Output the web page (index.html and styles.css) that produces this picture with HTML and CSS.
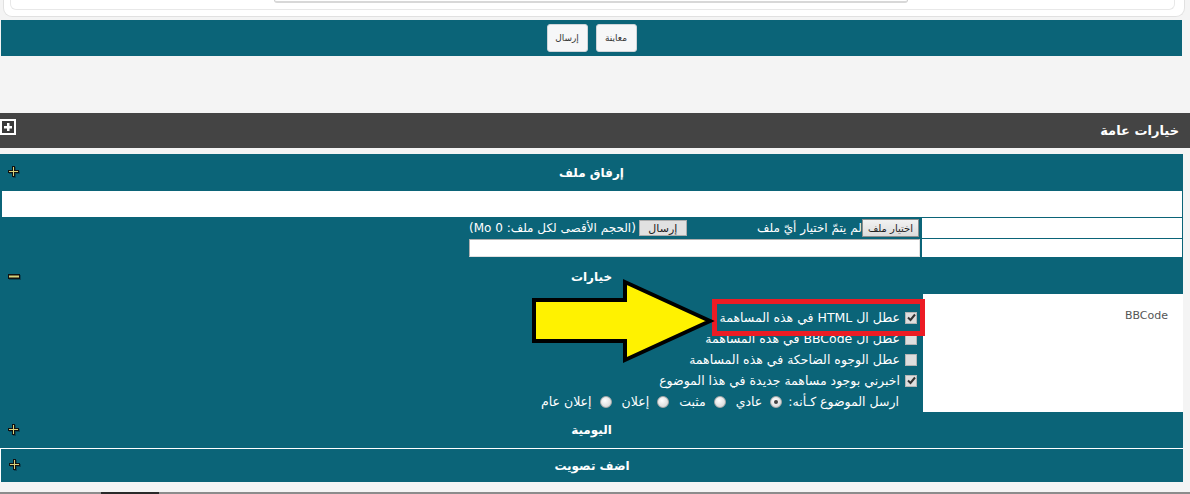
FILE: index.html
```html
<!DOCTYPE html>
<html lang="ar" dir="rtl">
<head>
    <meta charset="UTF-8">
    <title>إرسال موضوع جديد</title>
    <link rel="stylesheet" href="styles.css">
</head>
<body>
    <div class="editor-foot">
        <div class="editor-inner">
            <div class="editor-field"></div>
        </div>
    </div>

    <div class="submit-bar">
        <button class="small-btn">معاينة</button>
        <button class="small-btn">إرسال</button>
    </div>

    <div class="group-bar">
        <h2 class="group-title">خيارات عامة</h2>
        <span class="group-toggle">
            <svg width="16" height="16" viewBox="0 0 16 16">
                <rect x="0" y="0" width="16" height="16" fill="#fff"/>
                <rect x="2" y="2" width="12" height="12" fill="#3a3a3a"/>
                <rect x="7" y="4" width="2.5" height="8" fill="#fff"/>
                <rect x="4" y="7" width="8" height="2.5" fill="#fff"/>
            </svg>
        </span>
    </div>

    <div class="panel">
        <div class="panel-head">
            <span class="head-title">إرفاق ملف</span>
            <span class="head-icon">
                <svg width="13" height="13" viewBox="0 0 13 13">
                    <path d="M5 1h3v4h4v3h-4v4h-3v-4h-4v-3h4z" fill="#063442" opacity="0.6"/>
                    <path d="M4 0h3v4h4v3h-4v4h-3v-4h-4v-3h4z" fill="#111"/>
                    <path d="M5 1h1v4h4v1h-4v4h-1v-4h-4v-1h4z" fill="#d9d27a"/>
                </svg>
            </span>
        </div>
        <div class="attach-row"></div>
        <div class="attach-grid">
            <div class="cell-white"></div>
            <div class="cell-file">
                <span class="file-pick">
                    <button class="file-btn">اختيار ملف</button>
                    <span>لم يتمّ اختيار أيّ ملف</span>
                </span>
                <span class="file-send">
                    <button class="grey-btn">إرسال</button>
                    <span>(الحجم الأقصى لكل ملف: 0 Mo)</span>
                </span>
            </div>
            <div class="cell-white"></div>
            <div class="cell-input"><input type="text" class="text-input"></div>
        </div>

        <div class="panel-head head-options">
            <span class="head-title">خيارات</span>
            <span class="head-icon">
                <svg width="13" height="6" viewBox="0 0 13 6">
                    <rect x="1" y="1" width="12" height="5" fill="#063442" opacity="0.6"/>
                    <rect x="0" y="0" width="12" height="5" fill="#111"/>
                    <rect x="1" y="1.5" width="10" height="2" fill="#d9d27a"/>
                </svg>
            </span>
        </div>
        <div class="options-row">
            <div class="options-note">BBCode</div>
            <div class="options-list">
                <label class="opt opt-marked">
                    <span class="box checked">
                        <svg width="9" height="9" viewBox="0 0 9 9"><path d="M1 4.5l2.5 2.5l4.5-5.5" fill="none" stroke="#333" stroke-width="2"/></svg>
                    </span>
                    عطل ال HTML في هذه المساهمة
                </label>
                <label class="opt"><span class="box"></span>عطل ال BBCode في هذه المساهمة</label>
                <label class="opt"><span class="box"></span>عطل الوجوه الضاحكة في هذه المساهمة</label>
                <label class="opt">
                    <span class="box checked">
                        <svg width="9" height="9" viewBox="0 0 9 9"><path d="M1 4.5l2.5 2.5l4.5-5.5" fill="none" stroke="#333" stroke-width="2"/></svg>
                    </span>
                    اخبرني بوجود مساهمة جديدة في هذا الموضوع
                </label>
                <div class="opt post-type">
                    <span class="type-label">ارسل الموضوع كـأنه:</span>
                    <span class="radio on"></span><span class="type-name">عادي</span>
                    <span class="radio"></span><span class="type-name">مثبت</span>
                    <span class="radio"></span><span class="type-name">إعلان</span>
                    <span class="radio"></span><span class="type-name">إعلان عام</span>
                </div>

                <svg class="pointer-arrow" width="188" height="90" viewBox="0 0 188 90">
                    <polygon points="5,24 96,24 96,6 181,45 96,84 96,65 5,65" fill="#fff200" stroke="#000" stroke-width="4"/>
                </svg>
            </div>
        </div>

        <div class="panel-head head-daily">
            <span class="head-title">اليومية</span>
            <span class="head-icon">
                <svg width="13" height="13" viewBox="0 0 13 13">
                    <path d="M5 1h3v4h4v3h-4v4h-3v-4h-4v-3h4z" fill="#063442" opacity="0.6"/>
                    <path d="M4 0h3v4h4v3h-4v4h-3v-4h-4v-3h4z" fill="#111"/>
                    <path d="M5 1h1v4h4v1h-4v4h-1v-4h-4v-1h4z" fill="#d9d27a"/>
                </svg>
            </span>
        </div>
    </div>

    <div class="panel poll">
        <div class="panel-head head-poll">
            <span class="head-title">اضف تصويت</span>
            <span class="head-icon">
                <svg width="13" height="13" viewBox="0 0 13 13">
                    <path d="M5 1h3v4h4v3h-4v4h-3v-4h-4v-3h4z" fill="#063442" opacity="0.6"/>
                    <path d="M4 0h3v4h4v3h-4v4h-3v-4h-4v-3h4z" fill="#111"/>
                    <path d="M5 1h1v4h4v1h-4v4h-1v-4h-4v-1h4z" fill="#d9d27a"/>
                </svg>
            </span>
        </div>
    </div>

    <div class="page-end"></div>
</body>
</html>
```

FILE: styles.css
```css
body {
    margin: 0;
    background-color: #f4f4f4;
    font-family: "DejaVu Sans", sans-serif;
    font-size: 12px;
    color: #fff;
}

/* bottom of the message editor */
.editor-foot {
    height: 16px;
    margin: 0 5px 0 3px;
    background-color: #fff;
    border: 1px solid #e1e1e1;
    border-top: none;
    border-radius: 0 0 9px 9px;
}

.editor-inner {
    height: 9px;
    margin: 0 9px 0 6px;
    border: 1px solid #e8e8e8;
    border-top: none;
    border-radius: 0 0 6px 6px;
}

.editor-field {
    width: 632px;
    height: 1px;
    margin: 0 auto 0 263px;
    border: 1px solid #cfcfcf;
    border-top: none;
    border-bottom: 2px solid #d8d8d8;
    border-radius: 0 0 4px 4px;
}

.submit-bar {
    height: 36px;
    margin: 3px 8px 0 1px;
    background-color: #0b6478;
    display: flex;
    justify-content: center;
    align-items: center;
    gap: 8px;
}

.small-btn {
    width: 41px;
    height: 28px;
    padding: 0;
    background-color: #f6f7f8;
    border: 1px solid #cfd4d8;
    border-radius: 3px;
    font-family: "DejaVu Sans", sans-serif;
    font-size: 9px;
    color: #333;
}

/* general options bar */
.group-bar {
    height: 35px;
    margin-top: 57px;
    padding-right: 11px;
    background-color: #444;
    display: flex;
    justify-content: space-between;
    align-items: center;
}

.group-title {
    margin: 0;
    font-size: 13px;
    font-weight: bold;
}

.group-toggle {
    align-self: flex-start;
    margin-top: 6px;
    line-height: 0;
}

.panel {
    margin: 6px 7px 0 0;
    background-color: #0b6478;
}

.panel-head {
    height: 37px;
    display: grid;
    grid-template-columns: 1fr auto 1fr;
    align-items: center;
}

.head-title {
    grid-column: 2;
    font-weight: bold;
    font-size: 12px;
}

.head-icon {
    grid-column: 3;
    justify-self: end;
    margin-left: 8px;
    line-height: 0;
}

.head-options {
    padding-top: 3px;
    height: 34px;
}

.head-daily {
    height: 36px;
}

.attach-row {
    height: 26px;
    margin: 0 1px 0 2px;
    background-color: #fff;
}

.attach-grid {
    display: grid;
    grid-template-columns: 260px 451px;
    grid-template-rows: 20px 18px;
    gap: 1px 2px;
    margin: 1px 1px 0 0;
}

.cell-white {
    background-color: #fff;
}

.cell-file {
    display: flex;
    justify-content: space-between;
    align-items: center;
    white-space: nowrap;
}

.file-pick,
.file-send {
    display: flex;
    align-items: center;
}

.file-btn {
    height: 18px;
    margin-right: 1px;
    padding: 0 5px;
    background: linear-gradient(#f2f2f2, #dcdcdc);
    border: 1px solid #8e8e8e;
    font-family: "DejaVu Sans", sans-serif;
    font-size: 10px;
    color: #222;
}

.grey-btn {
    width: 48px;
    height: 16px;
    margin-left: 3px;
    padding: 0;
    background-color: #e1e1e1;
    border: 1px solid #adadad;
    font-family: "DejaVu Sans", sans-serif;
    font-size: 11px;
    color: #222;
}

.text-input {
    display: block;
    width: 100%;
    height: 18px;
    box-sizing: border-box;
    margin: 0;
    border: 1px solid #b0b0b0;
    border-right-color: #e0e0e0;
    border-bottom-color: #e0e0e0;
    background-color: #fff;
}

/* options */
.options-row {
    display: grid;
    grid-template-columns: 260px 1fr;
    column-gap: 5px;
}

.options-note {
    height: 118px;
    box-sizing: border-box;
    padding: 15px 15px 0 0;
    background-color: #fff;
    color: #555;
    font-size: 11px;
}

.options-list {
    position: relative;
    padding: 13px 1px 0 0;
    font-size: 12.5px;
}

.opt {
    width: fit-content;
    height: 21px;
    display: flex;
    align-items: center;
    gap: 5px;
    white-space: nowrap;
}

.opt-marked {
    outline: 5px solid #ec1c24;
    outline-offset: 3px;
}

.box {
    width: 10px;
    height: 10px;
    border: 1px solid #b5b5b5;
    background-color: #dedede;
    display: flex;
    align-items: center;
    justify-content: center;
}

.post-type {
    padding-right: 18px;
    gap: 0;
}

.type-label {
    margin-left: 6px;
}

.radio {
    width: 10px;
    height: 10px;
    border: 1px solid #a9a9a9;
    border-radius: 50%;
    background: radial-gradient(circle at 40% 35%, #fff, #cfcfcf);
    display: flex;
    align-items: center;
    justify-content: center;
}

.radio.on::after {
    content: "";
    width: 4px;
    height: 4px;
    border-radius: 50%;
    background-color: #444;
}

.type-name {
    margin: 0 8px 0 10px;
}

.pointer-arrow {
    position: absolute;
    left: 529px;
    top: -18px;
}

.poll {
    margin-top: 0;
    border-top: 1px solid #fff;
    border-left: 1px solid #fff;
}

.head-poll {
    height: 33px;
}

.page-end {
    height: 2px;
    margin-top: 10px;
    background: linear-gradient(to right, #8c8c8c 101px, #2a2a2a 101px, #2a2a2a 159px, #8c8c8c 159px);
}
```
